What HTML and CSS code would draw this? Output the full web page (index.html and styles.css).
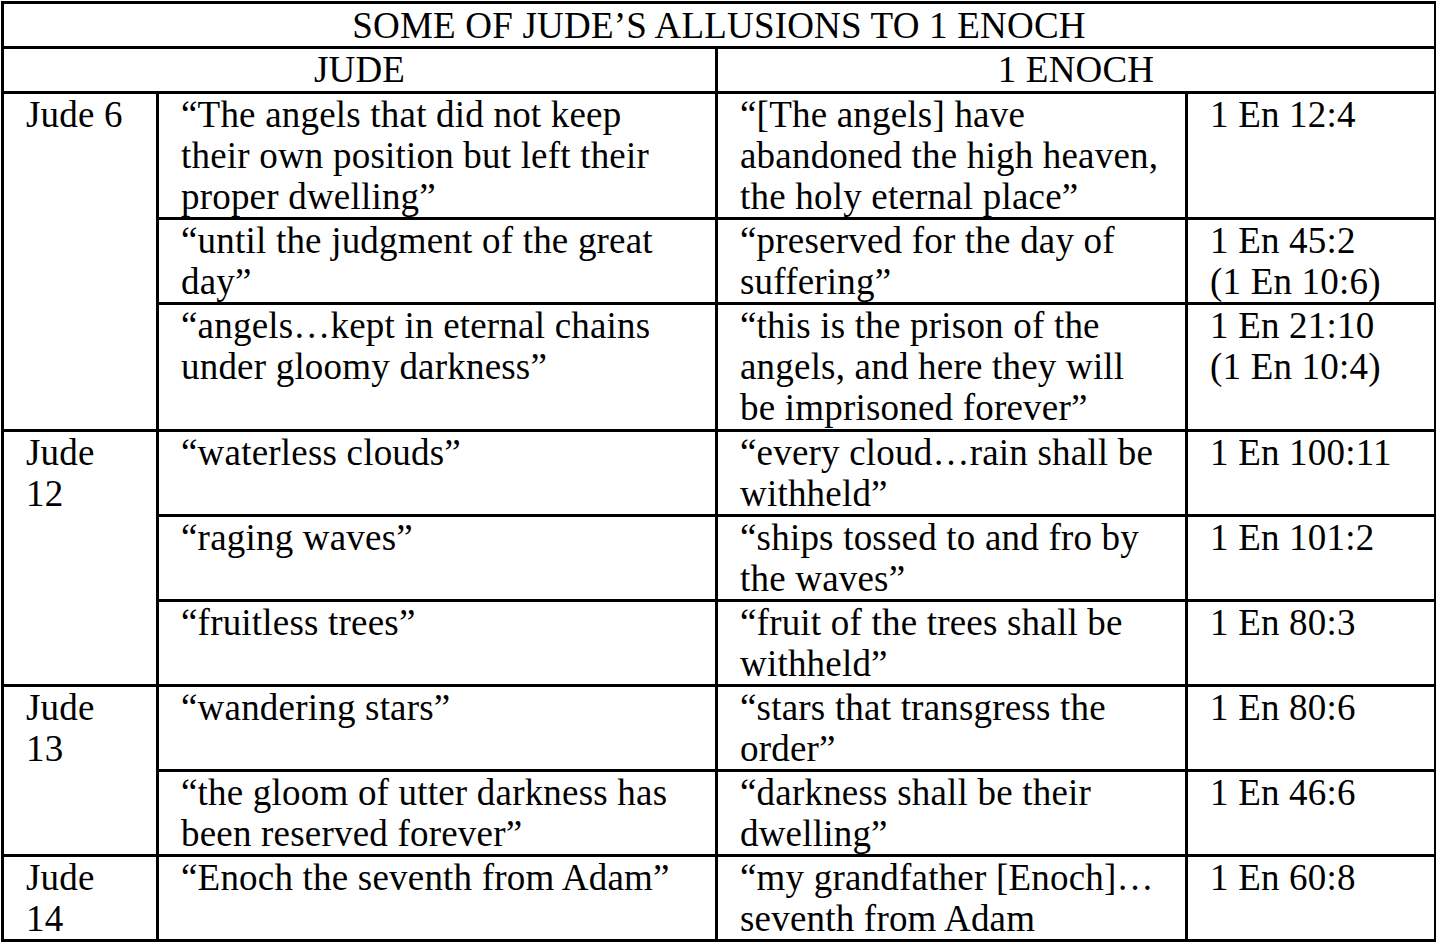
FILE: index.html
```html
<!DOCTYPE html>
<html lang="en">
<head>
<meta charset="utf-8">
<title>Some of Jude’s Allusions to 1 Enoch</title>
<link rel="stylesheet" href="styles.css">
</head>
<body>
<table class="allusions">
  <colgroup>
    <col class="c-ref">
    <col class="c-jude">
    <col class="c-enoch">
    <col class="c-enref">
  </colgroup>
  <thead>
    <tr><th colspan="4" class="title">SOME OF JUDE’S ALLUSIONS TO 1 ENOCH</th></tr>
    <tr><th colspan="2" class="head">JUDE</th><th colspan="2" class="head">1 ENOCH</th></tr>
  </thead>
  <tbody>
    <tr>
      <td rowspan="3">Jude 6</td>
      <td>“The angels that did not keep<br>their own position but left their<br>proper dwelling”</td>
      <td>“[The angels] have<br>abandoned the high heaven,<br>the holy eternal place”</td>
      <td>1 En 12:4</td>
    </tr>
    <tr>
      <td>“until the judgment of the great<br>day”</td>
      <td>“preserved for the day of<br>suffering”</td>
      <td>1 En 45:2<br>(1 En 10:6)</td>
    </tr>
    <tr class="tall">
      <td>“angels…kept in eternal chains<br>under gloomy darkness”</td>
      <td>“this is the prison of the<br>angels, and here they will<br>be imprisoned forever”</td>
      <td>1 En 21:10<br>(1 En 10:4)</td>
    </tr>
    <tr>
      <td rowspan="3">Jude<br>12</td>
      <td>“waterless clouds”</td>
      <td>“every cloud…rain shall be<br>withheld”</td>
      <td>1 En 100:11</td>
    </tr>
    <tr>
      <td>“raging waves”</td>
      <td>“ships tossed to and fro by<br>the waves”</td>
      <td>1 En 101:2</td>
    </tr>
    <tr>
      <td>“fruitless trees”</td>
      <td>“fruit of the trees shall be<br>withheld”</td>
      <td>1 En 80:3</td>
    </tr>
    <tr>
      <td rowspan="2">Jude<br>13</td>
      <td>“wandering stars”</td>
      <td>“stars that transgress the<br>order”</td>
      <td>1 En 80:6</td>
    </tr>
    <tr>
      <td>“the gloom of utter darkness has<br>been reserved forever”</td>
      <td>“darkness shall be their<br>dwelling”</td>
      <td>1 En 46:6</td>
    </tr>
    <tr>
      <td>Jude<br>14</td>
      <td>“Enoch the seventh from Adam”</td>
      <td>“my grandfather [Enoch]…<br>seventh from Adam</td>
      <td>1 En 60:8</td>
    </tr>
  </tbody>
</table>
</body>
</html>
```
FILE: styles.css
```css
html, body {
  margin: 0;
  padding: 0;
  background: #ffffff;
}

body {
  font-family: "Liberation Serif", "Times New Roman", serif;
  font-size: 37px;
  letter-spacing: 0.2px;
  line-height: 41px;
  color: #000000;
}

.allusions {
  border-collapse: collapse;
  table-layout: fixed;
  width: 1433px;
  margin: 1px 0 0 1px;
}

.c-ref { width: 155px; }
.c-jude { width: 559px; }
.c-enoch { width: 470px; }
.c-enref { width: 249px; }

.allusions th,
.allusions td {
  border: 3px solid #000000;
  padding: 0 0 0 22px;
  vertical-align: top;
  text-align: left;
  font-weight: normal;
  white-space: nowrap;
}

.allusions .tall td {
  padding-bottom: 1px;
}

.allusions th.title {
  text-align: center;
  padding: 1px 0 0 0;
  line-height: 41.4px;
}

.allusions th.head {
  text-align: center;
  padding: 0;
  line-height: 42px;
}
```
